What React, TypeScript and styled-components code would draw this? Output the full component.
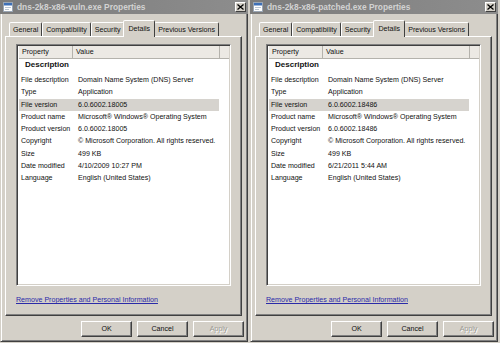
import React from 'react';
import styled, { createGlobalStyle } from 'styled-components';

const GlobalStyle = createGlobalStyle`
  html, body {
    margin: 0;
    padding: 0;
    background: #d4d0c8;
  }
  body {
    font-family: 'Liberation Sans', Arial, sans-serif;
    font-size: 7.1px;
    color: #111;
  }
`;

const Desktop = styled.div`
  display: flex;
  gap: 2px;
  width: 500px;
  height: 343px;
  overflow: hidden;
  background: #d4d0c8;
`;

const Window = styled.div`
  width: 248px;
  height: 342px;
  display: flex;
  flex-direction: column;
  background: #d4d0c8;
  border-left: 1px solid #d4d0c8;
  border-right: 1px solid #404040;
  border-bottom: 1px solid #404040;
  box-shadow: inset 1px 0 #fff, inset -1px -1px #808080;
  box-sizing: border-box;
`;

const TitleBar = styled.div`
  height: 14px;
  margin: 0 -1px;
  display: flex;
  align-items: center;
  padding: 0 2px 0 3px;
  gap: 4px;
  background: linear-gradient(to right, #7b7b7b, #8d8d8d);
`;

const Title = styled.span`
  flex: 1;
  font-weight: bold;
  font-size: 8.4px;
  color: #d2d2d2;
  white-space: nowrap;
`;

const CloseButton = styled.div`
  width: 11px;
  height: 10px;
  box-sizing: border-box;
  background: #d4d0c8;
  border: 1px solid;
  border-color: #fff #404040 #404040 #fff;
  display: flex;
  align-items: center;
  justify-content: center;
`;

const Body = styled.div`
  flex: 1;
  display: flex;
  flex-direction: column;
  padding: 5px 3px 0 4px;
`;

const TabStrip = styled.div`
  display: flex;
  align-items: flex-end;
  height: 17px;
  padding-left: 4px;
  margin-right: 2px;
  position: relative;
  z-index: 1;
`;

const Tab = styled.div<{ $active?: boolean }>`
  height: ${(p) => (p.$active ? '17px' : '14px')};
  padding: 0 ${(p) => (p.$active ? '4px' : '3px')};
  margin: 0 ${(p) => (p.$active ? '-1px' : '0')};
  box-sizing: border-box;
  display: flex;
  align-items: center;
  white-space: nowrap;
  background: #d4d0c8;
  border: 1px solid;
  border-bottom: none;
  border-color: #fff #404040 transparent #fff;
  border-radius: 2px 2px 0 0;
  padding-top: ${(p) => (p.$active ? '0' : '1px')};
  position: relative;
  z-index: ${(p) => (p.$active ? 2 : 1)};
  margin-bottom: ${(p) => (p.$active ? '-1px' : '0')};
`;

const Panel = styled.div`
  height: 280px;
  margin-right: 2px;
  box-sizing: border-box;
  border: 1px solid;
  border-color: #fff #404040 #404040 #fff;
  box-shadow: inset -1px -1px #808080;
  padding: 7px 10px 0 10px;
  display: flex;
  flex-direction: column;
`;

const ListView = styled.div`
  height: 242px;
  box-sizing: border-box;
  background: #fff;
  border: 1px solid;
  border-color: #808080 #fff #fff #808080;
  box-shadow: inset 1px 1px #404040, inset -1px -1px #d4d0c8;
  padding: 1px 1px 1px 2px;
  display: flex;
  flex-direction: column;
`;

const Header = styled.div`
  display: flex;
  height: 12px;
  background: #ece9e4;
  border-bottom: 1px solid #b4b2ac;
`;

const HeaderCell = styled.div<{ $w?: number }>`
  ${(p) => (p.$w ? `width: ${p.$w}px;` : 'flex: 1;')}
  box-sizing: border-box;
  padding-left: 3px;
  display: flex;
  align-items: center;
  border-right: 1px solid #b4b2ac;
  &:last-child {
    border-right: none;
  }
`;

const Group = styled.div`
  height: 11px;
  margin-bottom: 4px;
  padding-left: 6px;
  display: flex;
  align-items: center;
  font-weight: bold;
  font-size: 8px;
`;

const Row = styled.div<{ $selected?: boolean }>`
  display: flex;
  align-items: center;
  height: 12.25px;
  width: 200px;
  background: ${(p) => (p.$selected ? '#d6d3ce' : 'transparent')};
  white-space: nowrap;
`;

const Key = styled.span`
  width: 55px;
  padding-left: 2px;
  flex-shrink: 0;
`;

const Val = styled.span`
  padding-left: 2px;
`;

const Link = styled.a`
  margin-top: 9px;
  color: #2b2ba8;
  text-decoration: underline;
  line-height: 10px;
  white-space: nowrap;
`;

const ButtonRow = styled.div`
  display: flex;
  justify-content: flex-end;
  gap: 5px;
  margin-top: 5px;
`;

const Button = styled.div<{ $disabled?: boolean }>`
  width: 51px;
  height: 16px;
  box-sizing: border-box;
  display: flex;
  align-items: center;
  justify-content: center;
  border: 1px solid;
  border-color: #fff #404040 #404040 #fff;
  box-shadow: inset -1px -1px #808080;
  color: ${(p) => (p.$disabled ? '#9a9892' : '#111')};
  text-shadow: ${(p) => (p.$disabled ? '1px 1px #fff' : 'none')};
`;

const FileIcon = () => (
  <svg width="10" height="10" viewBox="0 0 10 10">
    <rect x="0.5" y="0.5" width="9" height="9" fill="#fff" stroke="#9aa6b4" />
    <rect x="1" y="1" width="8" height="2.5" fill="#3d6fb6" />
    <rect x="2" y="5" width="6" height="1" fill="#b8c4d2" />
    <rect x="2" y="7" width="4" height="1" fill="#b8c4d2" />
  </svg>
);

const CloseGlyph = () => (
  <svg width="7" height="6" viewBox="0 0 7 6">
    <path d="M0.5 0.5 L6.5 5.5 M6.5 0.5 L0.5 5.5" stroke="#000" strokeWidth="1.3" />
  </svg>
);

type Info = {
  file: string;
  version: string;
  modified: string;
};

const files: Info[] = [
  { file: 'dns-2k8-x86-vuln.exe', version: '6.0.6002.18005', modified: '4/10/2009 10:27 PM' },
  { file: 'dns-2k8-x86-patched.exe', version: '6.0.6002.18486', modified: '6/21/2011 5:44 AM' },
];

const tabs = ['General', 'Compatibility', 'Security', 'Details', 'Previous Versions'];

const PropsDialog = ({ info }: { info: Info }) => {
  const rows: [string, string][] = [
    ['File description', 'Domain Name System (DNS) Server'],
    ['Type', 'Application'],
    ['File version', info.version],
    ['Product name', 'Microsoft\u00ae Windows\u00ae Operating System'],
    ['Product version', info.version],
    ['Copyright', '\u00a9 Microsoft Corporation. All rights reserved.'],
    ['Size', '499 KB'],
    ['Date modified', info.modified],
    ['Language', 'English (United States)'],
  ];
  return (
    <Window>
      <TitleBar>
        <FileIcon />
        <Title>{info.file} Properties</Title>
        <CloseButton>
          <CloseGlyph />
        </CloseButton>
      </TitleBar>
      <Body>
        <TabStrip>
          {tabs.map((t) => (
            <Tab key={t} $active={t === 'Details'}>
              {t}
            </Tab>
          ))}
        </TabStrip>
        <Panel>
          <ListView>
            <Header>
              <HeaderCell $w={54}>Property</HeaderCell>
              <HeaderCell $w={147}>Value</HeaderCell>
              <HeaderCell />
            </Header>
            <Group>Description</Group>
            {rows.map(([k, v]) => (
              <Row key={k} $selected={k === 'File version'}>
                <Key>{k}</Key>
                <Val>{v}</Val>
              </Row>
            ))}
          </ListView>
          <Link>Remove Properties and Personal Information</Link>
        </Panel>
        <ButtonRow>
          <Button>OK</Button>
          <Button>Cancel</Button>
          <Button $disabled>Apply</Button>
        </ButtonRow>
      </Body>
    </Window>
  );
};

const App = () => {
  return (
    <Desktop>
      <GlobalStyle />
      {files.map((f) => (
        <PropsDialog key={f.file} info={f} />
      ))}
    </Desktop>
  );
};

export default App;
